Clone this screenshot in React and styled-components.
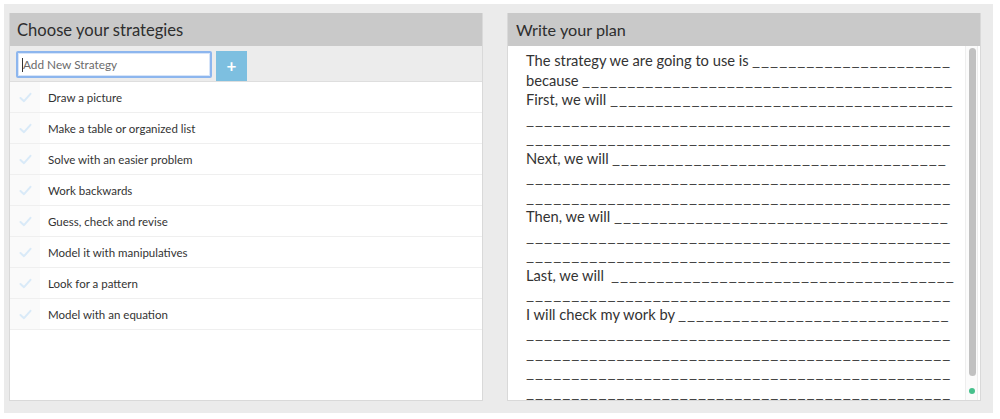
import React from "react";
import styled, { createGlobalStyle } from "styled-components";

const GlobalStyle = createGlobalStyle`
  html, body { margin: 0; padding: 0; background: #ffffff; }
  body { font-family: Lato, "Open Sans", sans-serif; color: #333; }
  * { box-sizing: border-box; }
`;

const Outer = styled.div`
  margin: 4px 0 0 4px;
  width: 989px;
  height: 409px;
  background: #ebebeb;
  display: flex;
  gap: 24px;
  padding: 9px 12px 12px 5px;
`;

const Panel = styled.section`
  width: 474px;
  height: 388px;
  background: #fff;
  border: 1px solid #d9d9d9;
  border-top: none;
  display: flex;
  flex-direction: column;
  overflow: hidden;
`;

const Header = styled.h2`
  margin: 0;
  height: 33px;
  flex: 0 0 33px;
  background: #c9c9c9;
  font-size: ${(p) => p.$size || 16.6}px;
  font-weight: 400;
  line-height: 34px;
  padding-left: ${(p) => p.$indent || 7}px;
  color: #2e2e2e;
`;

const Toolbar = styled.div`
  height: 36px;
  flex: 0 0 36px;
  background: #ececec;
  border-bottom: 1px solid #dedede;
  display: flex;
  align-items: flex-start;
  padding: 5px 0 0 6px;
  gap: 4px;
`;

const InputWrap = styled.div`
  position: relative;
  width: 196px;
  height: 27px;
`;

const Input = styled.input`
  width: 100%;
  height: 100%;
  border: 2px solid #8db6ee;
  border-radius: 2px;
  box-shadow: inset 0 0 0 1px #d7e5f9;
  padding: 0 5px;
  font-family: Lato, sans-serif;
  font-size: 11.8px;
  color: #333;
  outline: none;
  background: #fff;
  &::placeholder { color: #6b6b6b; }
`;

const Caret = styled.span`
  position: absolute;
  left: 6px;
  top: 7px;
  width: 1px;
  height: 14px;
  background: #333;
`;

const AddButton = styled.button`
  width: 31px;
  height: 30px;
  border: none;
  border-radius: 0;
  background: #7dbfe0;
  color: #fff;
  font-family: Lato, sans-serif;
  font-size: 17px;
  font-weight: 700;
  line-height: 28px;
  padding: 0;
  cursor: pointer;
`;

const List = styled.ul`
  list-style: none;
  margin: 0;
  padding: 0;
`;

const Row = styled.li`
  display: flex;
  height: 31px;
  border-bottom: 1px solid #efefef;
  align-items: stretch;
`;

const CheckCell = styled.span`
  width: 30px;
  flex: 0 0 30px;
  background: #fafafa;
  display: flex;
  align-items: center;
  justify-content: center;
`;

const Label = styled.span`
  display: flex;
  align-items: center;
  padding-left: 8px;
  font-size: 11.5px;
  color: #333;
`;

const Body = styled.div`
  flex: 1;
  display: flex;
  min-height: 0;
`;

const PlanText = styled.div`
  flex: 1;
  overflow: hidden;
  padding: 5px 0 0 18px;
  font-size: 14.7px;
  line-height: 19.5px;
  color: #333;
  white-space: pre;
`;

const Line = styled.div`
  height: 19.5px;
`;

const Blank = styled.span`
  display: inline-block;
  letter-spacing: 0.8px;
  transform: scaleX(1.2);
  transform-origin: left center;
  color: #444;
`;

const Track = styled.div`
  width: 13px;
  flex: 0 0 13px;
  margin-right: 2px;
  border-left: 1px solid #eeeeee;
  border-right: 1px solid #eeeeee;
  background: #fbfbfb;
  padding: 2px 2px 0 3px;
  display: flex;
  flex-direction: column;
  align-items: flex-start;
`;

const Thumb = styled.div`
  width: 7px;
  height: 328px;
  border-radius: 4px;
  background: #c1c1c1;
`;

const Dot = styled.div`
  width: 6px;
  height: 6px;
  border-radius: 50%;
  background: #46c08c;
  margin-top: 12px;
`;

const Check = () => (
  <svg width="13" height="11" viewBox="0 0 13 11">
    <path d="M1.5 6 L5 9.2 L11.5 1.8" fill="none" stroke="#d9eaf8" strokeWidth="2" strokeLinecap="round" strokeLinejoin="round" />
  </svg>
);

const strategies = [
  "Draw a picture",
  "Make a table or organized list",
  "Solve with an easier problem",
  "Work backwards",
  "Guess, check and revise",
  "Model it with manipulatives",
  "Look for a pattern",
  "Model with an equation",
];

const u = (n) => "_".repeat(n);
const FULL = 47;
const plan = [
  ["The strategy we are going to use is ", 22],
  ["because ", 41],
  ["First, we will ", 38],
  ["", FULL],
  ["", FULL],
  ["Next, we will ", 37],
  ["", FULL],
  ["", FULL],
  ["Then, we will ", 37],
  ["", FULL],
  ["", FULL],
  ["Last, we will  ", 38],
  ["", FULL],
  ["I will check my work by ", 30],
  ["", FULL],
  ["", FULL],
  ["", FULL],
  ["", FULL],
];

export default function App() {
  return (
    <>
      <GlobalStyle />
      <Outer>
        <Panel>
          <Header>Choose your strategies</Header>
          <Toolbar>
            <InputWrap>
              <Input placeholder="Add New Strategy" />
              <Caret />
            </InputWrap>
            <AddButton>+</AddButton>
          </Toolbar>
          <List>
            {strategies.map((s) => (
              <Row key={s}>
                <CheckCell><Check /></CheckCell>
                <Label>{s}</Label>
              </Row>
            ))}
          </List>
        </Panel>
        <Panel>
          <Header $indent={8} $size={16.2}>Write your plan</Header>
          <Body>
            <PlanText>
              {plan.map(([t, n], i) => (
                <Line key={i}>
                  {t}
                  <Blank>{u(n)}</Blank>
                </Line>
              ))}
            </PlanText>
            <Track>
              <Thumb />
              <Dot />
            </Track>
          </Body>
        </Panel>
      </Outer>
    </>
  );
}
